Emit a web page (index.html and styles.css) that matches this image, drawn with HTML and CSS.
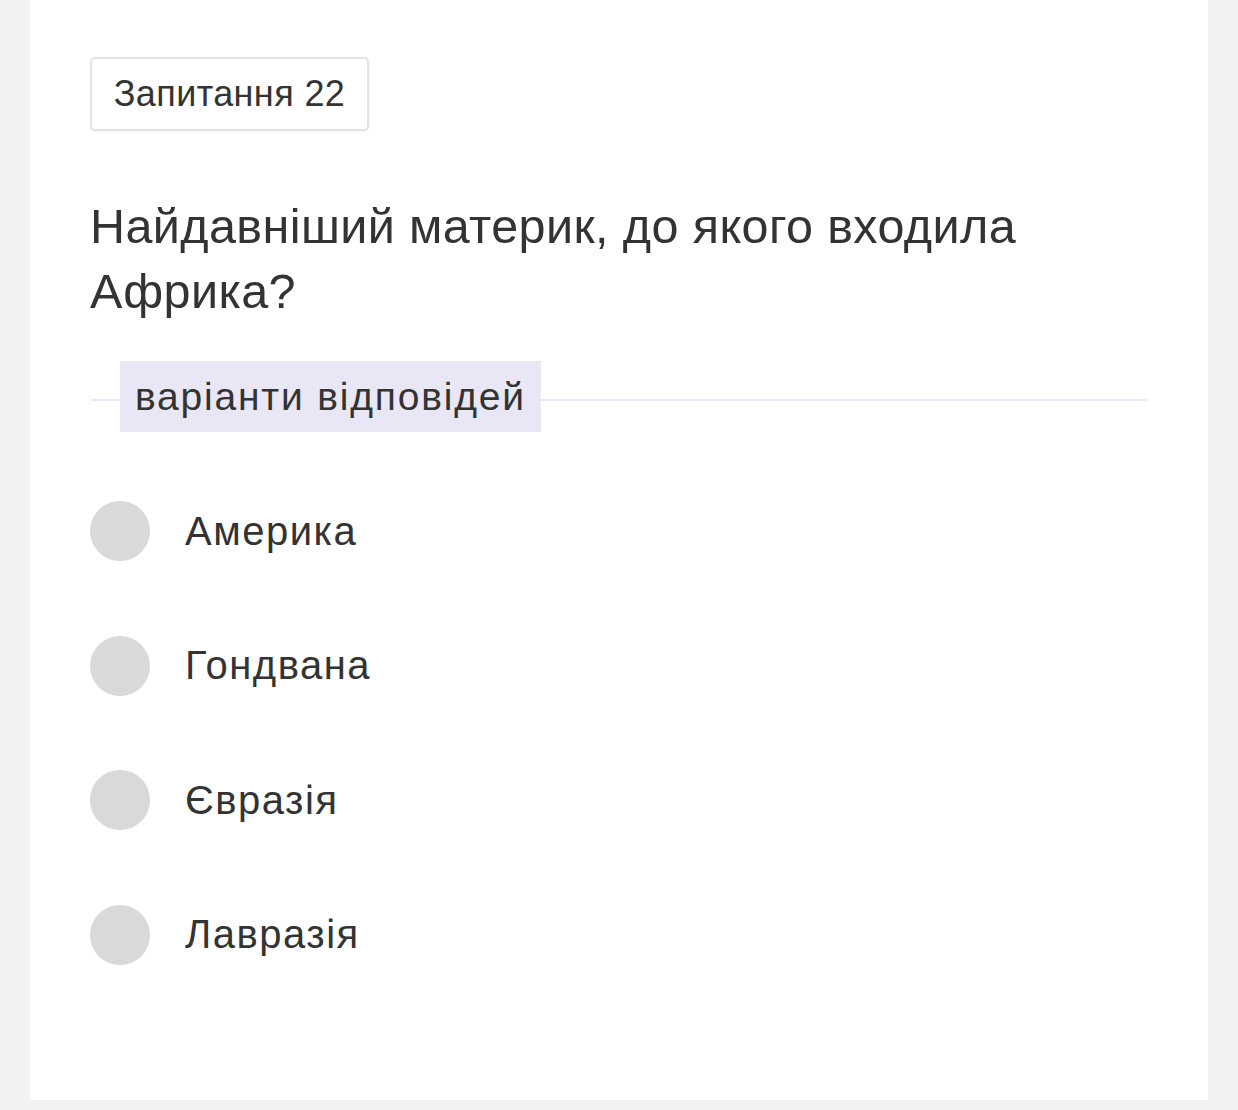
FILE: index.html
```html
<!DOCTYPE html>
<html lang="uk">
<head>
<meta charset="utf-8">
<link rel="stylesheet" href="styles.css">
</head>
<body>
<div class="page">
  <div class="card">
    <div class="badge">Запитання 22</div>
    <div class="question">Найдавніший материк, до якого входила Африка?</div>
    <div class="divider">
      <span class="legend">варіанти відповідей</span>
    </div>
    <div class="options">
      <div class="option"><span class="radio"></span><span class="label">Америка</span></div>
      <div class="option"><span class="radio"></span><span class="label">Гондвана</span></div>
      <div class="option"><span class="radio"></span><span class="label">Євразія</span></div>
      <div class="option"><span class="radio"></span><span class="label">Лавразія</span></div>
    </div>
  </div>
</div>
</body>
</html>
```
FILE: styles.css
```css
html, body {
  margin: 0;
  padding: 0;
  background: #f2f2f2;
}
body {
  width: 1238px;
  height: 1110px;
  overflow: hidden;
  font-family: "Liberation Sans", Arial, sans-serif;
  color: #333333;
}
.page {
  padding: 0 30px;
}
.card {
  background: #ffffff;
  height: 1100px;
  box-sizing: border-box;
  padding: 57px 60px 0 60px;
  display: flex;
  flex-direction: column;
  align-items: flex-start;
}
.badge {
  box-sizing: border-box;
  height: 74px;
  width: 279px;
  border: 2px solid #e3e3e3;
  border-radius: 5px;
  box-shadow: 0 1px 3px rgba(0,0,0,0.06);
  font-size: 36px;
  letter-spacing: 0.4px;
  display: flex;
  align-items: center;
  justify-content: center;
  color: #333;
}
.question {
  margin-top: 63px;
  font-size: 48.5px;
  letter-spacing: 0.4px;
  line-height: 65px;
  width: 990px;
}
.divider {
  margin-top: 37px;
  width: 1058px;
  display: flex;
  align-items: center;
  background: linear-gradient(#eae8f5, #eae8f5) no-repeat 0 38px / 100% 2px;
  height: 71px;
}
.legend {
  margin-left: 30px;
  background: #e9e7f6;
  height: 71px;
  padding: 0 15px;
  display: flex;
  align-items: center;
  font-size: 39px;
  letter-spacing: 1.8px;
  color: #333;
}
.options {
  margin-top: 69px;
  display: flex;
  flex-direction: column;
  gap: 74.5px;
}
.option {
  display: flex;
  align-items: center;
  height: 60px;
}
.radio {
  width: 60px;
  height: 60px;
  border-radius: 50%;
  background: #d9d9d9;
  flex: none;
}
.label {
  margin-left: 35px;
  font-size: 40px;
  letter-spacing: 1.5px;
  color: #333;
}
```
